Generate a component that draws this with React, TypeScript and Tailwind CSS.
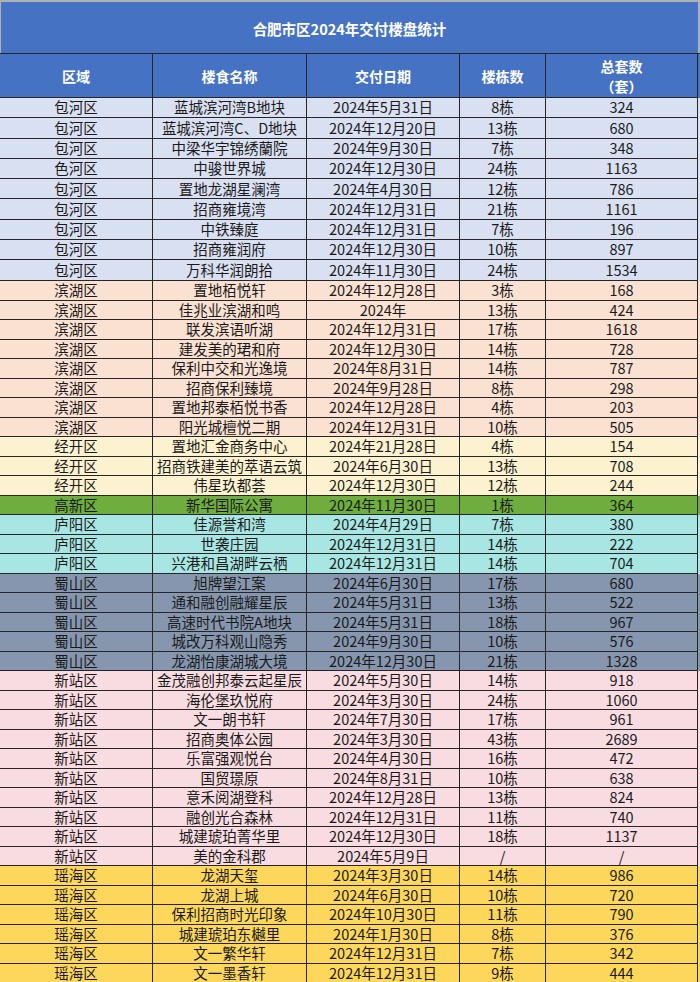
import React from "react";

type Row = [string, string, string, string, string];

const groups: { bg: string; rows: Row[] }[] = [
  {
    bg: "bg-[#d9e0f1]",
    rows: [
      ["包河区", "蓝城滨河湾B地块", "2024年5月31日", "8栋", "324"],
      ["包河区", "蓝城滨河湾C、D地块", "2024年12月20日", "13栋", "680"],
      ["包河区", "中梁华宇锦绣蘭院", "2024年9月30日", "7栋", "348"],
      ["色河区", "中骏世界城", "2024年12月30日", "24栋", "1163"],
      ["包河区", "置地龙湖星澜湾", "2024年4月30日", "12栋", "786"],
      ["包河区", "招商雍境湾", "2024年12月31日", "21栋", "1161"],
      ["包河区", "中铁臻庭", "2024年12月31日", "7栋", "196"],
      ["包河区", "招商雍润府", "2024年12月30日", "10栋", "897"],
      ["包河区", "万科华润朗拾", "2024年11月30日", "24栋", "1534"],
    ],
  },
  {
    bg: "bg-[#fae1d2]",
    rows: [
      ["滨湖区", "置地栢悦轩", "2024年12月28日", "3栋", "168"],
      ["滨湖区", "佳兆业滨湖和鸣", "2024年", "13栋", "424"],
      ["滨湖区", "联发滨语听湖", "2024年12月31日", "17栋", "1618"],
      ["滨湖区", "建发美的珺和府", "2024年12月30日", "14栋", "728"],
      ["滨湖区", "保利中交和光逸境", "2024年8月31日", "14栋", "787"],
      ["滨湖区", "招商保利臻境", "2024年9月28日", "8栋", "298"],
      ["滨湖区", "置地邦泰栢悦书香", "2024年12月28日", "4栋", "203"],
      ["滨湖区", "阳光城檀悦二期", "2024年12月31日", "10栋", "505"],
    ],
  },
  {
    bg: "bg-[#fdf2d0]",
    rows: [
      ["经开区", "置地汇金商务中心", "2024年21月28日", "4栋", "154"],
      ["经开区", "招商铁建美的萃语云筑", "2024年6月30日", "13栋", "708"],
      ["经开区", "伟星玖都荟", "2024年12月30日", "12栋", "244"],
    ],
  },
  {
    bg: "bg-[#6fad3f]",
    rows: [["高新区", "新华国际公寓", "2024年11月30日", "1栋", "364"]],
  },
  {
    bg: "bg-[#a7e6e2]",
    rows: [
      ["庐阳区", "佳源誉和湾", "2024年4月29日", "7栋", "380"],
      ["庐阳区", "世袭庄园", "2024年12月31日", "14栋", "222"],
      ["庐阳区", "兴港和昌湖畔云栖", "2024年12月31日", "14栋", "704"],
    ],
  },
  {
    bg: "bg-[#8696ae]",
    rows: [
      ["蜀山区", "旭牌望江案", "2024年6月30日", "17栋", "680"],
      ["蜀山区", "通和融创融耀星辰", "2024年5月31日", "13栋", "522"],
      ["蜀山区", "高速时代书院A地块", "2024年5月31日", "18栋", "967"],
      ["蜀山区", "城改万科观山隐秀", "2024年9月30日", "10栋", "576"],
      ["蜀山区", "龙湖怡康湖城大境", "2024年12月30日", "21栋", "1328"],
    ],
  },
  {
    bg: "bg-[#f9dce1]",
    rows: [
      ["新站区", "金茂融创邦泰云起星辰", "2024年5月30日", "14栋", "918"],
      ["新站区", "海伦堡玖悦府", "2024年3月30日", "24栋", "1060"],
      ["新站区", "文一朗书轩", "2024年7月30日", "17栋", "961"],
      ["新站区", "招商奥体公园", "2024年3月30日", "43栋", "2689"],
      ["新站区", "乐富强观悦台", "2024年4月30日", "16栋", "472"],
      ["新站区", "国贸璟原", "2024年8月31日", "10栋", "638"],
      ["新站区", "意禾阅湖登科", "2024年12月28日", "13栋", "824"],
      ["新站区", "融创光合森林", "2024年12月31日", "11栋", "740"],
      ["新站区", "城建琥珀菁华里", "2024年12月30日", "18栋", "1137"],
      ["新站区", "美的金科郡", "2024年5月9日", "/", "/"],
    ],
  },
  {
    bg: "bg-[#fdd75c]",
    rows: [
      ["瑶海区", "龙湖天玺", "2024年3月30日", "14栋", "986"],
      ["瑶海区", "龙湖上城", "2024年6月30日", "10栋", "720"],
      ["瑶海区", "保利招商时光印象", "2024年10月30日", "11栋", "790"],
      ["瑶海区", "城建琥珀东樾里", "2024年1月30日", "8栋", "376"],
      ["瑶海区", "文一繁华轩", "2024年12月31日", "7栋", "342"],
      ["瑶海区", "文一墨香轩", "2024年12月31日", "9栋", "444"],
    ],
  },
];

const cols = "grid grid-cols-[153px_154px_153px_86px_152px]";
const cell =
  "flex items-center justify-center border-r border-b border-[#262626] leading-none whitespace-nowrap";

export default function App() {
  let idx = 0;
  return (
    <div
      className="w-[700px] h-[982px] overflow-hidden bg-[#b8b8b8] text-[#1a1a1a]"
      style={{ fontFamily: '"Noto Sans CJK SC", "Noto Sans", sans-serif' }}
    >
      {/* Title */}
      <div className="h-[53px] border-t-2 border-l border-r-2 border-[#b0b0b0] bg-[#4672c4] flex items-center justify-center">
        <span className="text-white text-[14.5px] font-bold pt-[3px]">
          合肥市区2024年交付楼盘统计
        </span>
      </div>
      {/* Header */}
      <div className="bg-[#4672c4] pr-[2px] border-t border-[#262626]">
        <div className={`${cols} h-[44px] text-white text-[14px] font-bold`}>
          <div className={cell}>区域</div>
          <div className={cell}>楼食名称</div>
          <div className={cell}>交付日期</div>
          <div className={cell}>楼栋数</div>
          <div className="flex flex-col items-center justify-center border-r border-b border-[#262626] whitespace-nowrap">
            <span className="leading-[20px]">总套数</span>
            <span className="leading-[20px]">（套）</span>
          </div>
        </div>
      </div>
      {/* Body */}
      {groups.map((g) =>
        g.rows.map((r) => {
          const i = idx++;
          const h = i < 10 ? "h-[20.3px]" : "h-[19.5px]";
          return (
            <div key={i} className={`${g.bg} pr-[2px]`}>
              <div className={`${cols} ${h} text-[14.5px]`}>
                {r.map((c, j) => (
                  <div key={j} className={cell}>
                    {c}
                  </div>
                ))}
              </div>
            </div>
          );
        })
      )}
    </div>
  );
}
